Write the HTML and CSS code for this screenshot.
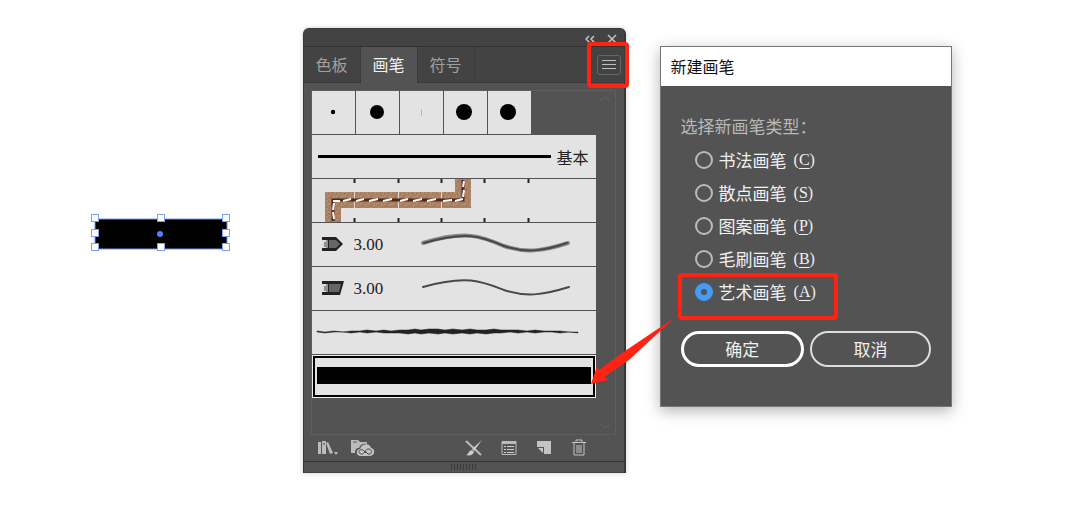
FILE: index.html
```html
<!DOCTYPE html>
<html lang="zh-CN">
<head>
  <meta charset="UTF-8" />
  <meta name="viewport" content="width=device-width, initial-scale=1.0"/>
  <title>新建画笔</title>
  <link rel="stylesheet" href="styles.css">
</head>
<body>

  <main class="workspace">

    <!-- Selected rectangle -->
    <svg class="selection" width="140" height="40" viewBox="0 0 140 40">
      <rect x="4" y="5" width="132" height="30" fill="#000" stroke="#7396f5" />
      <g fill="#fff" stroke="#7d9ff8">
        <rect x="0.5" y="0.5" width="7" height="7" />
        <rect x="66.500" y="0.5" width="7" height="7" />
        <rect x="131.500" y="0.5" width="7" height="7" />
        <rect x="0.5" y="15.500" width="7" height="7" />
        <rect x="131.500" y="15.500" width="7" height="7" />
        <rect x="0.5" y="29.500" width="7" height="7" />
        <rect x="66.500" y="29.500" width="7" height="7" />
        <rect x="131.500" y="29.500" width="7" height="7" />
      </g>
      <circle cx="69" cy="20" r="3" fill="#4f80ff" />
    </svg>

    <!-- Brushes panel -->
    <section class="panel">
      <div class="panel-bar">
        <button aria-label="折叠">
          <svg width="10" height="10" viewBox="0 0 10 10"><path d="M4 2L1 5l3 3M9 2L6 5l3 3" /></svg>
        </button>
        <button aria-label="关闭">
          <svg width="10" height="10" viewBox="0 0 10 10"><path d="M1 1l8 8M9 1L1 9" /></svg>
        </button>
      </div>

      <nav class="tabs">
        <button class="tab">色板</button>
        <button class="tab active">画笔</button>
        <button class="tab">符号</button>
        <div class="menu">
          <button class="menu-btn" aria-label="菜单">
            <svg width="14" height="12" viewBox="0 0 14 12"><path d="M0 1.500h14M0 5.500h14M0 9.500h14" /></svg>
          </button>
        </div>
      </nav>

      <div class="brush-box">
        <div class="brushes">
          <div class="dots">
            <div><svg width="43" height="43"><circle cx="21" cy="21" r="2.200" /></svg></div>
            <div><svg width="43" height="43"><circle cx="21" cy="21" r="7" /></svg></div>
            <div><svg width="43" height="43"><path d="M21.500 18v7" stroke="#bbb" /></svg></div>
            <div><svg width="43" height="43"><circle cx="20" cy="21" r="8" /></svg></div>
            <div><svg width="43" height="43"><circle cx="20" cy="21" r="8" /></svg></div>
          </div>

          <div class="brush basic"><hr><span>基本</span></div>

          <div class="brush">
            <svg width="284" height="43" viewBox="0 0 284 43">
              <defs>
                <pattern id="leather" width="8" height="8" patternUnits="userSpaceOnUse">
                  <rect width="8" height="8" fill="#aa8263" />
                  <path d="M0 1h2M5 2h2M2 5h1M6 6h2M3 7h1" stroke="#bd9777" />
                  <path d="M3 1h1M1 3h2M6 4h1M4 6h1M0 7h1" stroke="#957053" />
                </pattern>
              </defs>
              <path d="M13 43V13h130V0h16v29H29v14z" fill="url(#leather)" />
              <path d="M42.500 13v16M86.500 13v16M129.500 13v16" stroke="#e2d9d0" />
              <path d="M21 42V21h130V1" fill="none" stroke="#50251b" stroke-width="3" />
              <g stroke="#fff" stroke-width="2">
                <path d="M22 40l-1-7M21 31l1-7M21 22h7M31 22l8-2M44 22l8-2M57 22l9-2M71 22l9-2M88 22l8-2M101 22l9-2M115 22l9-2M131 22l9-1M143 22l8-2M151 18l1-7M151 8l1-6" />
              </g>
              <path d="M42.500 0v4M86.500 0v4M129.500 0v4M172.500 0v4M216.500 0v4M42.500 39v4M86.500 39v4M129.500 39v4M172.500 39v4M216.500 39v4" stroke="#222" stroke-width="2" />
            </svg>
          </div>

          <div class="brush sized">
            <svg width="22" height="15" viewBox="0 0 22 15">
              <path d="M0 0h14l7 7-7 7H0z" fill="#222" /><path d="M7 3h7l4 4-4 4H7z" fill="#666" />
              <path d="M0 3h6v8H0z" fill="#ddd" /><path d="M3 5v5M5 3v8" stroke="#444" />
            </svg>
            <span>3.00</span>
            <svg class="stroke" width="150" height="24" viewBox="0 0 150 24">
              <path d="M2 10C45-3 60 3 83 13c24 8 42 4 64-3" stroke="#888" stroke-width="4" />
              <path d="M3 10C45-2 60 3 83 13c24 8 42 4 63-3" stroke="#484848" stroke-width="2" />
            </svg>
          </div>

          <div class="brush sized">
            <svg width="22" height="15" viewBox="0 0 22 15">
              <path d="M0 0h22l-4 14H0z" fill="#222" /><path d="M7 3h12l-2 8H7z" fill="#666" />
              <path d="M0 3h6v8H0z" fill="#ddd" /><path d="M3 5v5M5 3v8" stroke="#444" />
            </svg>
            <span>3.00</span>
            <svg class="stroke" width="150" height="24" viewBox="0 0 150 24">
              <path d="M2 10C45-2 60 4 83 13c24 8 42 4 65-3" stroke="#484848" stroke-width="2" />
            </svg>
          </div>

          <div class="brush">
            <svg width="284" height="43" viewBox="0 0 284 43">
              <path d="M5 20l8 1 9-1 9 1 8-1 9 0 7-1 9 1 8-1 7 1 9-1 8 0 7-1 6 1 8-1 9 0 7 1 8-1 9 1 8-1 7 1 9 0 8-1 7 1 9 0 8 0 9 1 8-1 9 1 8 0 8 0 9 1 9 0v1l-9-1-9 1-8-1-8 0-9 1-8-1-9 1-8-1-9 1-7 0-8 1-9-1-7 1-8-1-9 1-8-1-7 1-9-1-8 1-6-1-7 1-8-1-9 0-7 0-8-1-9 1-7-1-9 1-8-1-9 0-9 1-8-1z" fill="#222" stroke="#222" stroke-width="0.5" />
            </svg>
          </div>

          <div class="brush selected"><div class="bar"></div></div>
        </div>
        <div class="scroll">
          <svg width="12" height="8" viewBox="0 0 12 8"><path d="M1 6l5-4 5 4" /></svg>
          <svg width="12" height="8" viewBox="0 0 12 8"><path d="M1 2l5 4 5-4" /></svg>
        </div>
      </div>

      <div class="tools">
        <button aria-label="画笔库菜单">
          <svg width="22" height="18" viewBox="0 0 22 18">
            <path d="M1 3h3v12H1zM5 2h4v13H5zM9 4l2-1 5 11-3 1z" fill="#bbb" /><path d="M7 4v2" stroke="#444" /><path d="M17 13h4l-2 3z" fill="#bbb" />
          </svg>
        </button>
        <button aria-label="库面板">
          <svg width="24" height="18" viewBox="0 0 24 18">
            <path d="M0 1h7l2 2h7v2C12 4 9 6 8 9c-3 0-4 2-4 5H0z" fill="#bbb" /><path d="M2 3h4" stroke="#555" />
            <path d="M10 17c-5 0-6-6-1-7 2-6 10-6 11-1 5 1 4 8-1 8z" fill="#c4c4c4" />
            <path d="M15 14l-3-3c-3-2-6 3-2 4 4 1 4-6 8-5s3 6-1 5l-3-3" fill="none" stroke="#484848" />
          </svg>
        </button>
        <button class="push" aria-label="移去画笔描边">
          <svg width="18" height="18" viewBox="0 0 18 18">
            <path d="M1 2L16 16" stroke="#bbb" stroke-width="2" /><path d="M17 1L9 12 7 10zM7 11l2 2c-1 3-4 4-8 3 3-1 2-4 6-5z" fill="#ccc" />
          </svg>
        </button>
        <button aria-label="所选对象的选项">
          <svg width="18" height="18" viewBox="0 0 18 18">
            <path d="M2 2.500h14v13H2z" fill="#555" stroke="#bbb" /><path d="M2 4h14" stroke="#bbb" stroke-width="2" /><path d="M4 7.500h2M7 7.500h7M4 10.500h2M7 10.500h7M4 13.500h2M7 13.500h7" stroke="#ccc" />
          </svg>
        </button>
        <button aria-label="新建画笔">
          <svg width="18" height="18" viewBox="0 0 18 18"><path d="M2 2h14v13H9V8H2z" fill="#c4c4c4" /><path d="M3 9h5v5z" fill="#c4c4c4" /></svg>
        </button>
        <button aria-label="删除画笔">
          <svg width="18" height="18" viewBox="0 0 18 18"><path d="M2 3.500h14M6 3.500V1h6v2.500M4 4v12h10V4M7 6v8M9 6v8M11 6v8" fill="none" stroke="#c4c4c4" /></svg>
        </button>
      </div>
      <div class="grip"><span></span></div>
    </section>

    <!-- New brush dialog -->
    <form class="dialog">
      <h1>新建画笔</h1>
      <div class="dialog-body">
        <fieldset>
          <legend>选择新画笔类型：</legend>
          <label><input type="radio" name="type"><span>书法画笔</span><kbd>(<u>C</u>)</kbd></label>
          <label><input type="radio" name="type"><span>散点画笔</span><kbd>(<u>S</u>)</kbd></label>
          <label><input type="radio" name="type"><span>图案画笔</span><kbd>(<u>P</u>)</kbd></label>
          <label><input type="radio" name="type"><span>毛刷画笔</span><kbd>(<u>B</u>)</kbd></label>
          <label class="marked"><input type="radio" name="type" checked><span>艺术画笔</span><kbd>(<u>A</u>)</kbd></label>
        </fieldset>
        <div class="actions">
          <button type="button" class="primary">确定</button>
          <button type="button">取消</button>
        </div>
      </div>
      <svg class="arrow" width="82" height="68" viewBox="0 0 82 68"><path d="M80 1L34 32 8 51 6 47 0 65l18-4-5-3 25-17 42-39z" fill="#ff2314" /></svg>
    </form>

  </main>

</body>
</html>
```

FILE: styles.css
```css
:root {
  --panel: #535353;
  --dark: #434343;
  --line: #5e5e5e;
  --paper: #e3e3e3;
  --red: #ff2314;
}

*,
*::after {
  box-sizing: border-box;
}

body {
  margin: 0;
  background: #fff;
  font-family: "Noto Sans CJK SC", sans-serif;
  font-size: 16px;
}

svg {
  display: block;
  flex: none;
}

button {
  padding: 0;
  border: none;
  background: none;
  color: inherit;
  font: inherit;
  cursor: pointer;
}

.workspace {
  display: grid;
  grid-template-columns: 178fr 322fr 293fr;
  column-gap: 34px;
  align-items: start;
  padding: 28px 128px 28px 91px;
}

.selection {
  align-self: center;
  margin-bottom: 34px;
}

/* Brushes panel */
.panel {
  background: var(--panel);
  border: 1px solid #383838;
  border-width: 1px 2px 0 1px;
  border-radius: 6px 6px 0 0;
  box-shadow: 0 0 5px rgba(0, 0, 0, 0.2);
}

.panel-bar {
  display: flex;
  justify-content: flex-end;
  align-items: center;
  gap: 12px;
  height: 18px;
  padding: 3px 7px 0;
  background: var(--dark);
  border-bottom: 1px solid #303030;
  border-radius: 5px 5px 0 0;
}

.panel-bar path {
  fill: none;
  stroke: #c4c4c4;
  stroke-width: 1.5;
}

.tabs {
  display: flex;
  align-items: flex-start;
  height: 36px;
  background: var(--dark);
  border-bottom: 1px solid #3b3b3b;
}

.tab {
  width: 57px;
  height: 36px;
  padding-bottom: 3px;
  border-right: 1px solid #3b3b3b;
  color: #a0a0a0;
}

.tab.active {
  background: var(--panel);
  color: #f2f2f2;
}

.menu {
  position: relative;
  margin: 8px 3px 0 auto;
}

.menu::after {
  content: "";
  position: absolute;
  inset: -13px -8px -13px -10px;
  border: 4px solid var(--red);
  border-radius: 4px;
  pointer-events: none;
}

.menu-btn {
  display: block;
  padding: 3px 4px;
  border: 1px solid #666;
  border-radius: 3px;
}

.menu-btn path {
  stroke: #c0c0c0;
}

.brush-box {
  display: flex;
  height: 345px;
  margin: 7px 8px 0 7px;
  border: 1px solid var(--line);
}

.brushes {
  flex: 1;
  display: flex;
  flex-direction: column;
  gap: 1px;
  min-width: 0;
}

.dots {
  display: grid;
  grid-template-columns: repeat(5, 43px);
  gap: 1px;
}

.dots div,
.brush {
  height: 43px;
  background: var(--paper);
  overflow: hidden;
}

.basic {
  display: flex;
  align-items: center;
  gap: 6px;
  padding: 0 7px 0 6px;
  color: #222;
}

.basic hr {
  flex: 1;
  margin: 0;
  border: none;
  border-top: 3px solid #000;
}

.sized {
  display: flex;
  align-items: center;
  gap: 10px;
  padding: 0 25px 0 10px;
  color: #222;
  font-family: "Liberation Serif", serif;
  font-size: 17px;
}

.stroke {
  margin-left: auto;
  fill: none;
  stroke-linecap: round;
}

.selected {
  padding: 11px 4px;
  border: 1px solid #eee;
  box-shadow: inset 0 0 0 2px #000;
}

.bar {
  height: 17px;
  background: #000;
}

.scroll {
  display: flex;
  flex-direction: column;
  justify-content: space-between;
  align-items: center;
  width: 19px;
  padding: 4px 0;
}

.scroll path {
  fill: none;
  stroke: #626262;
}

.tools {
  display: flex;
  align-items: center;
  gap: 17px;
  height: 26px;
  padding: 0 36px 0 13px;
}

.tools button:nth-child(2) {
  margin-left: -5px;
}

.tools .push {
  margin-left: auto;
}

.grip {
  display: flex;
  justify-content: center;
  align-items: center;
  height: 12px;
  border-top: 1px solid #333;
  border-bottom: 1px solid #444;
}

.grip span {
  width: 26px;
  height: 6px;
  background: repeating-linear-gradient(90deg, #393939 0 1px, var(--panel) 1px 3px);
}

/* New brush dialog */
.dialog {
  position: relative;
  margin-top: 18px;
  background: var(--panel);
  border: 1px solid #777;
  box-shadow: 0 4px 14px rgba(0, 0, 0, 0.3);
  color: #f0f0f0;
}

.dialog h1 {
  margin: 0;
  padding: 0 10px;
  background: #fff;
  color: #111;
  font-size: 16px;
  font-weight: 400;
  line-height: 39px;
}

.dialog-body {
  padding: 24px 20px 39px;
  font-size: 17px;
}

fieldset {
  min-width: 0;
  margin: 0;
  padding: 0;
  border: none;
}

legend {
  margin-bottom: 1px;
  padding: 0;
  color: #b8b8b8;
  line-height: 32px;
}

label {
  position: relative;
  display: flex;
  align-items: center;
  height: 33px;
  padding-left: 14px;
}

label input {
  appearance: none;
  width: 18px;
  height: 18px;
  margin: 0 6px 0 0;
  border: 2px solid #bbb;
  border-radius: 50%;
}

label input:checked {
  border: 6px solid #469cf4;
}

kbd {
  margin-left: 7px;
  font-family: "Liberation Serif", serif;
  font-size: 16px;
}

u {
  text-underline-offset: 3px;
}

.marked::after {
  content: "";
  position: absolute;
  top: -2px;
  left: -3px;
  width: 160px;
  height: 47px;
  border: 4px solid var(--red);
  border-radius: 4px;
  pointer-events: none;
}

.actions {
  display: flex;
  gap: 6px;
  margin-top: 23px;
}

.actions button {
  flex: 1;
  height: 36px;
  padding-bottom: 2px;
  border: 2px solid #ddd;
  border-radius: 18px;
}

.actions .primary {
  border: 3px solid #fff;
}

.arrow {
  position: absolute;
  top: 272px;
  left: -70px;
}
```
